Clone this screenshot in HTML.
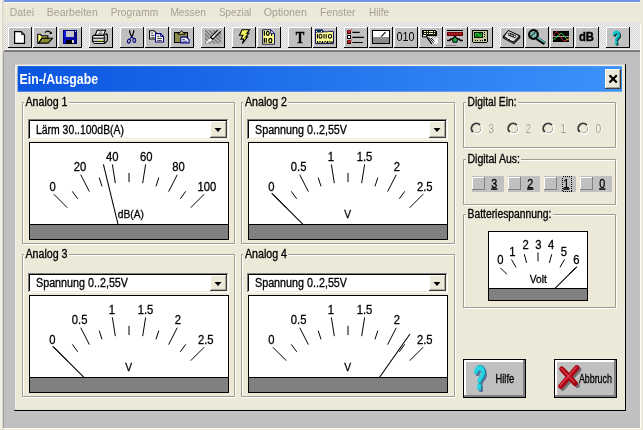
<!DOCTYPE html>
<html><head><meta charset="utf-8"><title>Ein-/Ausgabe</title>
<style>
html,body{margin:0;padding:0;background:#ECE9D8;overflow:hidden}
svg{display:block;font-family:"Liberation Sans",sans-serif;will-change:transform}
rect{shape-rendering:crispEdges}
</style></head><body>
<svg width="643" height="430" viewBox="0 0 643 430">
<rect x="0" y="0" width="643" height="430" fill="#ECE9D8" />
<rect x="0" y="0" width="2" height="430" fill="#F3F1E6" />
<rect x="2" y="0" width="1" height="430" fill="#DAD7CA" />
<rect x="3" y="0" width="1" height="430" fill="#E4E1D4" />
<rect x="4" y="0" width="636" height="2" fill="#7094E6" />
<rect x="4" y="2" width="636" height="1" fill="#F8F7F0" />
<text x="9.7" y="15.7" font-size="11" fill="#A6A28F" textLength="24.3" lengthAdjust="spacingAndGlyphs" >Datei</text>
<text x="46.8" y="15.7" font-size="11" fill="#A6A28F" textLength="51.0" lengthAdjust="spacingAndGlyphs" >Bearbeiten</text>
<text x="110.7" y="15.7" font-size="11" fill="#A6A28F" textLength="47.5" lengthAdjust="spacingAndGlyphs" >Programm</text>
<text x="170.4" y="15.7" font-size="11" fill="#A6A28F" textLength="35.6" lengthAdjust="spacingAndGlyphs" >Messen</text>
<text x="219" y="15.7" font-size="11" fill="#A6A28F" textLength="32.3" lengthAdjust="spacingAndGlyphs" >Spezial</text>
<text x="263.8" y="15.7" font-size="11" fill="#A6A28F" textLength="43.0" lengthAdjust="spacingAndGlyphs" >Optionen</text>
<text x="320" y="15.7" font-size="11" fill="#A6A28F" textLength="35.6" lengthAdjust="spacingAndGlyphs" >Fenster</text>
<text x="369" y="15.7" font-size="11" fill="#A6A28F" textLength="20" lengthAdjust="spacingAndGlyphs" >Hilfe</text>
<defs><pattern id="dz" width="2" height="2" patternUnits="userSpaceOnUse"><rect width="2" height="2" fill="#f4f4f4"/><rect width="1" height="1" fill="#d2d2d2"/><rect x="1" y="1" width="1" height="1" fill="#d2d2d2"/></pattern></defs>
<rect x="4" y="22.6" width="636" height="28" fill="url(#dz)" style="shape-rendering:geometricPrecision"/>
<rect x="4" y="49.3" width="636" height="1.2" fill="#f4f4f4" style="shape-rendering:geometricPrecision" opacity="0.7"/>
<rect x="4" y="50.55" width="636" height="1.1" fill="#000" style="shape-rendering:geometricPrecision"/>
<rect x="3" y="51.65" width="637" height="376.35" fill="#C0C0C0" style="shape-rendering:geometricPrecision"/>
<rect x="3" y="52" width="1" height="376" fill="#A0A0A0" />
<rect x="3" y="428" width="638" height="1" fill="#fff" />
<rect x="640" y="23" width="1" height="406" fill="#fff" />
<rect x="8" y="27" width="24" height="21" fill="#000" />
<rect x="8" y="27" width="23" height="20" fill="#fff" />
<rect x="9" y="28" width="22" height="19" fill="#C0C0C0" />
<rect x="33" y="27" width="24" height="21" fill="#000" />
<rect x="33" y="27" width="23" height="20" fill="#fff" />
<rect x="34" y="28" width="22" height="19" fill="#C0C0C0" />
<rect x="58" y="27" width="24" height="21" fill="#000" />
<rect x="58" y="27" width="23" height="20" fill="#fff" />
<rect x="59" y="28" width="22" height="19" fill="#C0C0C0" />
<rect x="89" y="27" width="24" height="21" fill="#000" />
<rect x="89" y="27" width="23" height="20" fill="#fff" />
<rect x="90" y="28" width="22" height="19" fill="#C0C0C0" />
<rect x="120" y="27" width="24" height="21" fill="#000" />
<rect x="120" y="27" width="23" height="20" fill="#fff" />
<rect x="121" y="28" width="22" height="19" fill="#C0C0C0" />
<rect x="145" y="27" width="24" height="21" fill="#000" />
<rect x="145" y="27" width="23" height="20" fill="#fff" />
<rect x="146" y="28" width="22" height="19" fill="#C0C0C0" />
<rect x="170" y="27" width="24" height="21" fill="#000" />
<rect x="170" y="27" width="23" height="20" fill="#fff" />
<rect x="171" y="28" width="22" height="19" fill="#C0C0C0" />
<rect x="201" y="27" width="24" height="21" fill="#000" />
<rect x="201" y="27" width="23" height="20" fill="#fff" />
<rect x="202" y="28" width="22" height="19" fill="#C0C0C0" />
<rect x="232" y="27" width="24" height="21" fill="#000" />
<rect x="232" y="27" width="23" height="20" fill="#fff" />
<rect x="233" y="28" width="22" height="19" fill="#C0C0C0" />
<rect x="257" y="27" width="24" height="21" fill="#000" />
<rect x="257" y="27" width="23" height="20" fill="#fff" />
<rect x="258" y="28" width="22" height="19" fill="#C0C0C0" />
<rect x="288" y="27" width="24" height="21" fill="#000" />
<rect x="288" y="27" width="23" height="20" fill="#fff" />
<rect x="289" y="28" width="22" height="19" fill="#C0C0C0" />
<rect x="313" y="27" width="24" height="21" fill="#000" />
<rect x="313" y="27" width="23" height="20" fill="#fff" />
<rect x="314" y="28" width="22" height="19" fill="#C0C0C0" />
<rect x="344" y="27" width="24" height="21" fill="#000" />
<rect x="344" y="27" width="23" height="20" fill="#fff" />
<rect x="345" y="28" width="22" height="19" fill="#C0C0C0" />
<rect x="369" y="27" width="24" height="21" fill="#000" />
<rect x="369" y="27" width="23" height="20" fill="#fff" />
<rect x="370" y="28" width="22" height="19" fill="#C0C0C0" />
<rect x="394" y="27" width="24" height="21" fill="#000" />
<rect x="394" y="27" width="23" height="20" fill="#fff" />
<rect x="395" y="28" width="22" height="19" fill="#C0C0C0" />
<rect x="419" y="27" width="24" height="21" fill="#000" />
<rect x="419" y="27" width="23" height="20" fill="#fff" />
<rect x="420" y="28" width="22" height="19" fill="#C0C0C0" />
<rect x="444" y="27" width="24" height="21" fill="#000" />
<rect x="444" y="27" width="23" height="20" fill="#fff" />
<rect x="445" y="28" width="22" height="19" fill="#C0C0C0" />
<rect x="469" y="27" width="24" height="21" fill="#000" />
<rect x="469" y="27" width="23" height="20" fill="#fff" />
<rect x="470" y="28" width="22" height="19" fill="#C0C0C0" />
<rect x="500" y="27" width="24" height="21" fill="#000" />
<rect x="500" y="27" width="23" height="20" fill="#fff" />
<rect x="501" y="28" width="22" height="19" fill="#C0C0C0" />
<rect x="525" y="27" width="24" height="21" fill="#000" />
<rect x="525" y="27" width="23" height="20" fill="#fff" />
<rect x="526" y="28" width="22" height="19" fill="#C0C0C0" />
<rect x="550" y="27" width="24" height="21" fill="#000" />
<rect x="550" y="27" width="23" height="20" fill="#fff" />
<rect x="551" y="28" width="22" height="19" fill="#C0C0C0" />
<rect x="575" y="27" width="24" height="21" fill="#000" />
<rect x="575" y="27" width="23" height="20" fill="#fff" />
<rect x="576" y="28" width="22" height="19" fill="#C0C0C0" />
<rect x="606" y="27" width="24" height="21" fill="#000" />
<rect x="606" y="27" width="23" height="20" fill="#fff" />
<rect x="607" y="28" width="22" height="19" fill="#C0C0C0" />
<path d="M14.6 31.6 H21.2 L24.5 34.9 V43.3 H14.6 Z" fill="#fff" stroke="#000" stroke-width="1.2" stroke-linejoin="miter"/>
<path d="M21.4 32 V34.7 H24.1" fill="none" stroke="#000" stroke-width="0.7"/>
<path d="M37.7 43.1 V34.3 H40.6 L41.4 35.9 H47.9 V38 H41.9 L38.9 43.1 Z" fill="#FFFF80" stroke="#000" stroke-width="1.1" stroke-linejoin="round"/>
<path d="M38.6 43.1 L41.9 38.2 H52.8 L48.2 43.1 Z" fill="#8A8A30" stroke="#000" stroke-width="1.1" stroke-linejoin="round"/>
<path d="M45 32.6 C46.5 30.6 49.5 30.4 51.2 33.4" fill="none" stroke="#000" stroke-width="1.1"/>
<path d="M49.2 33.9 H51.7 V31.6 Z" fill="#000"/>
<rect x="63" y="30" width="14" height="13.8" fill="#00007A"/>
<rect x="63.9" y="30.8" width="2.2" height="12.2" fill="#1414E8"/>
<rect x="63.9" y="37" width="12.2" height="2.6" fill="#0A0AA8"/>
<rect x="66.1" y="30.8" width="8" height="6.2" fill="#C4C4C4"/>
<rect x="66.1" y="39.7" width="8" height="4.1" fill="#000"/>
<rect x="72" y="40.3" width="2" height="2.5" fill="#D8D8D8"/>
<rect x="74.8" y="31" width="0.9" height="0.9" fill="#D0D0F0"/>
<path d="M95.1 35.4 L97.2 30.2 H105.6 L103.3 35.4 Z" fill="#fff" stroke="#000" stroke-width="1.1"/>
<path d="M98.8 32.0 H102.8 M98.1 33.7 H102.1" stroke="#222" stroke-width="0.7"/>
<path d="M93.5 35.4 H104 L106.8 33.6 L107.4 35 V40.6 L104.6 43.4 H94.4 L92.6 41.6 V36.6 Z" fill="#D4D4D4" stroke="#000" stroke-width="1.1" stroke-linejoin="round"/>
<path d="M93.4 36.9 H103.8" stroke="#fff" stroke-width="0.9"/><path d="M92.8 38.2 H104.2 M92.8 41.4 H104.2 M104.3 35.6 V43.2" stroke="#000" stroke-width="1"/><path d="M93.4 42.4 H103.6" stroke="#f4f4f4" stroke-width="0.8"/>
<path d="M105.4 36.5 V42 M106.4 35.5 V41" stroke="#555" stroke-width="0.6" stroke-dasharray="1 1"/>
<rect x="98" y="39.5" width="4.8" height="1" fill="#C8E040"/>
<path d="M129.5 30.2 L130.2 33.8 L131.7 36.8 M133.9 30.2 L133.2 33.8 L131.7 36.8" fill="none" stroke="#000" stroke-width="1.2"/><path d="M131.7 36.6 L130.2 38.8 M131.7 36.6 L133.4 38.2" stroke="#000080" stroke-width="1.1"/>
<ellipse cx="128.9" cy="41.2" rx="1.45" ry="2.0" fill="none" stroke="#000080" stroke-width="1.1" transform="rotate(20 129.1 41.2)"/>
<ellipse cx="134.3" cy="40.4" rx="1.45" ry="2.0" fill="none" stroke="#000080" stroke-width="1.1" transform="rotate(-5 134.1 40.5)"/>
<path d="M149.6 30.7 H154 L156.3 33 V39 H149.6 Z" fill="#fff" stroke="#000" stroke-width="1.1"/>
<path d="M151.2 33 H153.2 M151.2 35.3 H154.4 M151.2 37.4 H154.4" stroke="#000" stroke-width="0.8"/>
<path d="M155.5 33.6 H160.6 L163.5 36.5 V42 H155.5 Z" fill="#fff" stroke="#000080" stroke-width="1.1"/>
<path d="M160.6 33.6 V36.5 H163.5" fill="none" stroke="#000080" stroke-width="0.9"/>
<path d="M157.2 36.3 H159.4 M157.2 38.4 H161.8 M157.2 40.4 H161.8" stroke="#000" stroke-width="0.8"/>
<rect x="174.6" y="32.4" width="12.8" height="10" rx="0.8" fill="#8C8C4C" stroke="#000" stroke-width="1.1"/>
<path d="M177.9 34.2 H185 V33 H183.4 L181.6 30.6 L179.6 33 H177.9 Z" fill="#E8E890" stroke="#000" stroke-width="1"/>
<path d="M180.8 37.1 H186.4 L189 39.7 V42.9 H180.8 Z" fill="#fff" stroke="#000080" stroke-width="1.1"/>
<path d="M182.4 39.4 H184.8 M182.4 41.2 H187.2" stroke="#000080" stroke-width="0.8"/>
<clipPath id="hc"><rect x="205" y="30" width="16.2" height="13.8"/></clipPath>
<g clip-path="url(#hc)" stroke="#7c7c7c" stroke-width="1.6"><line x1="193" y1="30" x2="206.8" y2="43.8"/><line x1="197" y1="30" x2="210.8" y2="43.8"/><line x1="201" y1="30" x2="214.8" y2="43.8"/><line x1="205" y1="30" x2="218.8" y2="43.8"/><line x1="209" y1="30" x2="222.8" y2="43.8"/><line x1="213" y1="30" x2="226.8" y2="43.8"/><line x1="217" y1="30" x2="230.8" y2="43.8"/><line x1="221" y1="30" x2="234.8" y2="43.8"/></g>
<path d="M217.6 30.2 L210.2 37.8 L212.7 39.2 L220.7 31.4" fill="#C8C8C8" stroke="none"/><path d="M213.6 34.4 L210.2 37.8 L212.7 39.2 L216.2 35.8" fill="#fff" stroke="none"/>
<path d="M217.6 30.2 L210.2 37.8 M220.7 31.4 L212.7 39.2" stroke="#000" stroke-width="1.1"/>
<path d="M210.4 37.4 L212.9 39.4" stroke="#000" stroke-width="1.6"/>
<path d="M210.2 38.6 L211.8 40 L206.2 42.8 Z" fill="#fff" stroke="#fff" stroke-width="0.8"/>
<path d="M242.1 29.8 H249.6 L246.8 33.3 H248.8 L245.7 36.9 H247.5 L242.4 43.6 L243.8 39.1 H241 L242.9 35.2 H239.5 Z" fill="#F4F460" stroke="#000" stroke-width="1.1" stroke-linejoin="miter"/>
<path d="M262.6 29.8 H270.7 L274.5 33.6 V44.2 H262.6 Z" fill="#FFFF8C" stroke="#101058" stroke-width="1"/>
<path d="M270.7 29.8 V33.6 H274.5 Z" fill="#fff" stroke="#000080" stroke-width="0.9"/>
<path d="M264.4 31 V35.6 M264.4 38 V42.8 M266.3 38 V42.8" stroke="#000" stroke-width="1.2"/>
<ellipse cx="267.8" cy="33.3" rx="1.4" ry="2" fill="none" stroke="#000" stroke-width="1.2"/>
<ellipse cx="270.3" cy="40.4" rx="1.5" ry="2.1" fill="none" stroke="#000" stroke-width="1.2"/>
<path d="M271.6 34 V36" stroke="#000" stroke-width="1"/>
<path d="M315.5 43.6 V31.8 H327.5 L328.5 31.4 H333.5 V43.6 Z" fill="#FFFF98" stroke="#101058" stroke-width="1"/>
<path d="M315.5 31.8 V29.9 H322.5 L323.3 31.8 Z" fill="#008000" stroke="#000080" stroke-width="1"/>
<rect x="316.2" y="30.6" width="0.9" height="0.9" fill="#fff"/><rect x="321.4" y="30.6" width="0.9" height="0.9" fill="#fff"/>
<path d="M317.5 34 V38.4 M324 34 V38.4 M326.2 34 V38.4" stroke="#000" stroke-width="1.05"/>
<ellipse cx="320.5" cy="36.2" rx="1.5" ry="2" fill="none" stroke="#000" stroke-width="1.05"/>
<ellipse cx="330" cy="36.2" rx="1.6" ry="2" fill="none" stroke="#000" stroke-width="1.05"/>
<path d="M317.5 41 V43.3 M322.5 41 V43.3 M327.5 41 V43.3 M332 41 V43.3" stroke="#000" stroke-width="1.1"/>
<path d="M319 43.2 C319 40.6 321.2 40.6 321.2 43.2 M324 43.2 C324 40.6 326.2 40.6 326.2 43.2 M328.8 43.2 C328.8 40.6 330.8 40.6 330.8 43.2" fill="none" stroke="#000" stroke-width="1"/>
<rect x="347.3" y="30.8" width="3.5" height="2.8" fill="#D81020" stroke="#300000" stroke-width="0.8"/>
<rect x="347.3" y="32.5" width="3.5" height="1.2" fill="#200000"/>
<path d="M347.6 30.6 L349.2 31.700000000000003 L352.2 29.400000000000002" fill="none" stroke="#F02838" stroke-width="1"/>
<rect x="347.5" y="35.800000000000004" width="3.2" height="2.9" fill="#fff" stroke="#000" stroke-width="1.1"/>
<rect x="347.3" y="40.900000000000006" width="3.5" height="2.8" fill="#D81020" stroke="#300000" stroke-width="0.8"/>
<rect x="347.3" y="42.6" width="3.5" height="1.2" fill="#200000"/>
<path d="M347.6 40.7 L349.2 41.800000000000004 L352.2 39.5" fill="none" stroke="#F02838" stroke-width="1"/>
<path d="M352.3 32.4 H359.7 M352.3 37.4 H363.9 M352.3 42.5 H362.8" stroke="#000" stroke-width="1.2"/>
<rect x="372.6" y="30.6" width="17" height="12.6" fill="#fff" stroke="#000" stroke-width="1.2"/>
<rect x="373.2" y="36.9" width="15.8" height="5.7" fill="#8C8C8C"/>
<path d="M385.5 32.2 L381.3 36.7" stroke="#000" stroke-width="1.1"/>
<rect x="422.5" y="30.3" width="13.6" height="5.6" rx="0.5" fill="#1c1c14" stroke="#000" stroke-width="1"/>
<rect x="424.30" y="31.05" width="1.5" height="1.1" fill="#FFFFC8"/>
<rect x="426.65" y="31.05" width="1.5" height="1.1" fill="#FFFFC8"/>
<rect x="429.00" y="31.05" width="1.5" height="1.1" fill="#FFFFC8"/>
<rect x="431.35" y="31.05" width="1.5" height="1.1" fill="#FFFFC8"/>
<rect x="433.70" y="31.05" width="1.5" height="1.1" fill="#FFFFC8"/>
<rect x="424.30" y="32.85" width="1.5" height="1.1" fill="#FFFFC8"/>
<rect x="426.65" y="32.85" width="1.5" height="1.1" fill="#FFFFC8"/>
<rect x="429.00" y="32.85" width="1.5" height="1.1" fill="#FFFFC8"/>
<rect x="431.35" y="32.85" width="1.5" height="1.1" fill="#FFFFC8"/>
<rect x="433.70" y="32.85" width="1.5" height="1.1" fill="#FFFFC8"/>
<rect x="423.2" y="34.7" width="2.6" height="1.7" fill="#F4F4E0"/>
<path d="M422.5 35 V36.9 H426" fill="none" stroke="#000" stroke-width="1"/>
<path d="M429.5 36.6 L437.4 36.8 L438.2 43.2 L434.8 44 L431 41.4 Z" fill="#fff"/>
<path d="M431.4 36.4 H436.6 M432.2 37.6 H437 M433 38.8 H436" stroke="#555" stroke-width="0.8" stroke-dasharray="0.8 0.9"/>
<path d="M426.2 36.4 L431.8 43.8" stroke="#000" stroke-width="1.3"/>
<path d="M428.8 37.4 L433.4 42.6 M431 38 L434.4 41.4" stroke="#000" stroke-width="0.9"/>
<rect x="447.1" y="29.8" width="15.7" height="1" fill="#000"/>
<rect x="447.1" y="32.1" width="15.7" height="3.8" fill="#6C0004"/>
<circle cx="449.4" cy="33.9" r="0.85" fill="#E83848"/>
<circle cx="451.9" cy="33.9" r="0.85" fill="#E83848"/>
<circle cx="454.7" cy="33.9" r="0.85" fill="#E83848"/>
<circle cx="457.5" cy="33.9" r="0.85" fill="#E83848"/>
<circle cx="460.5" cy="33.9" r="0.85" fill="#E83848"/>
<path d="M447.1 40.4 H449.6 L451 39 H452.6 L454.9 36.6 L457.3 39 H458.9 L460.3 40.4 H462.8" fill="none" stroke="#000" stroke-width="1.5"/>
<path d="M452.4 39.4 L454.9 36.9 L457.5 39.4 L457 42.3 H452.9 Z" fill="#18A040" stroke="#000" stroke-width="0.9"/>
<rect x="445.5" y="45" width="10" height="0.9" fill="#888"/>
<rect x="472.6" y="30.5" width="14.7" height="11.8" rx="1" fill="#C4C494" stroke="#000" stroke-width="1.1"/>
<rect x="474.4" y="32.1" width="8.2" height="5.2" fill="#0A7A1A" stroke="#000" stroke-width="0.9"/>
<path d="M475.2 35.6 C476.4 32.4 477.6 32.4 478.8 34.8 C480 37.2 480.8 36.8 481.8 34.6" fill="none" stroke="#30F040" stroke-width="0.9"/>
<rect x="484" y="32.2" width="1.1" height="1.1" fill="#000"/>
<rect x="484" y="34.2" width="1.1" height="1.1" fill="#000"/>
<rect x="484" y="36.1" width="1.1" height="1.1" fill="#000"/>
<rect x="474.7" y="39.7" width="1.1" height="1.1" fill="#000"/>
<rect x="476.9" y="39.7" width="1.1" height="1.1" fill="#000"/>
<rect x="479.7" y="39.7" width="1.1" height="1.1" fill="#000"/>
<rect x="481.9" y="39.7" width="1.1" height="1.1" fill="#000"/>
<rect x="484.2" y="38.9" width="2" height="2" fill="#000"/>
<path d="M508.4 29.9 L520.3 35.5 L520.3 37.9 L513.9 44.3 L502.9 38.3 L502.9 36 Z" fill="#000"/>
<path d="M508.5 31.1 L518.7 35.9 L513.5 41.4 L504.4 36.3 Z" fill="#D8D8D8"/>
<path d="M504.1 37.6 L513.5 42.7 L519.2 36.9 L519.2 37.5 L513.6 43.2 L504.1 38 Z" fill="#9c9c9c"/>
<path d="M509.4 34.3 L514.6 36.4" stroke="#000" stroke-width="2.9" stroke-linecap="round"/>
<path d="M510.4 34.7 L513.6 36" stroke="#B8B8A8" stroke-width="1.1"/>
<circle cx="509.3" cy="34.3" r="0.8" fill="#fff"/>
<circle cx="514.7" cy="36.4" r="0.8" fill="#fff"/>
<path d="M506.6 37.4 L509.2 38.7 M510 39.3 L512.2 40.4" stroke="#fff" stroke-width="0.9"/>
<circle cx="533.5" cy="34.5" r="4.3" fill="#5FAFA6" stroke="#000" stroke-width="2.3"/>
<path d="M531 31.8 V37.4 M533.4 31 V38.2 M535.8 31.8 V37.4" stroke="#E8F8F4" stroke-width="0.9" stroke-dasharray="0.9 1.0"/>
<path d="M537.6 29.8 L529.2 38.4" stroke="#000" stroke-width="1"/>
<path d="M536.8 38.2 L544.8 43.6" stroke="#000" stroke-width="3.6"/>
<path d="M537.4 37.6 L545 42.6" stroke="#5CC8BC" stroke-width="1.4"/>
<rect x="553" y="31.3" width="16" height="10.6" fill="#000"/>
<rect x="553" y="36.2" width="16" height="0.9" fill="#A0A0A0"/>
<path d="M553.4 36.4 C555 31.6 557.2 30.4 559 33.8 C561 37.6 563.6 43 566 40.6 C567 39.8 568 39 569 38.6" fill="none" stroke="#D83030" stroke-width="1"/>
<path d="M553.4 39.6 C555.4 39.4 557.6 35 561 33.2 C563 33 566 39.6 568.4 40" fill="none" stroke="#30D840" stroke-width="1"/>
<path d="M566 40.2 L568.8 38.8" stroke="#E0C040" stroke-width="0.9"/>
<text x="295.7" y="42.7" font-size="16" fill="#000" textLength="8.5" lengthAdjust="spacingAndGlyphs" font-weight="bold" font-family="'Liberation Serif',serif" stroke="#000" stroke-width="0.5">T</text>
<text x="396.6" y="41.0" font-size="12.6" fill="#010101" textLength="18" lengthAdjust="spacingAndGlyphs" >010</text>
<text x="579" y="40.8" font-size="13" fill="#000" textLength="15" lengthAdjust="spacingAndGlyphs" font-weight="bold" stroke="#000" stroke-width="0.45">dB</text>
<text x="613.2" y="44.7" font-size="19" fill="#002828" textLength="8.2" lengthAdjust="spacingAndGlyphs" font-weight="bold" stroke="#002828" stroke-width="0.9">?</text>
<text x="612.2" y="43.8" font-size="19" fill="#10C4C8" textLength="8.2" lengthAdjust="spacingAndGlyphs" font-weight="bold" stroke="#10C4C8" stroke-width="0.8">?</text>
<rect x="14.4" y="64.2" width="611.6" height="346.8" fill="#000" style="shape-rendering:geometricPrecision"/>
<rect x="14.4" y="64.2" width="610.5" height="345.6" fill="#fff" style="shape-rendering:geometricPrecision"/>
<rect x="15.5" y="65.3" width="609.4" height="344.5" fill="#ECE9D8" style="shape-rendering:geometricPrecision"/>
<defs><linearGradient id="tg" x1="0" x2="1" y1="0" y2="0"><stop offset="0" stop-color="#0A55E0"/><stop offset="1" stop-color="#3D92FB"/></linearGradient></defs>
<rect x="17.6" y="66.1" width="604.4" height="25.6" fill="url(#tg)" style="shape-rendering:geometricPrecision"/>
<text x="19.6" y="83.9" font-size="14" fill="#fff" textLength="78.4" lengthAdjust="spacingAndGlyphs" font-weight="bold" >Ein-/Ausgabe</text>
<rect x="605" y="69" width="16" height="20" fill="#404040" />
<rect x="605" y="69" width="15" height="19" fill="#fff" />
<rect x="606" y="70" width="14" height="18" fill="#ACA899" />
<rect x="606" y="70" width="13" height="17" fill="#ECE9D8" />
<path d="M609.5 75.3 L616.8 82.5 M616.8 75.3 L609.5 82.5" stroke="#000" stroke-width="2.2" fill="none"/>
<path d="M23.5 103.5 H235.5 V244.5 H23.5 Z" fill="none" stroke="#fff" stroke-width="1"/>
<path d="M22.5 102.5 H234.5 V243.5 H22.5 Z" fill="none" stroke="#A09D90" stroke-width="1"/>
<rect x="23.5" y="101" width="45" height="4" fill="#ECE9D8" />
<text x="25.5" y="106" font-size="12" fill="#000" textLength="42" lengthAdjust="spacingAndGlyphs" stroke="#000" stroke-width="0.3" >Analog 1</text>
<path d="M242.5 103.5 H455.5 V244.5 H242.5 Z" fill="none" stroke="#fff" stroke-width="1"/>
<path d="M241.5 102.5 H454.5 V243.5 H241.5 Z" fill="none" stroke="#A09D90" stroke-width="1"/>
<rect x="243" y="101" width="45" height="4" fill="#ECE9D8" />
<text x="245" y="106" font-size="12" fill="#000" textLength="42" lengthAdjust="spacingAndGlyphs" stroke="#000" stroke-width="0.3" >Analog 2</text>
<path d="M23.5 255.5 H235.5 V397.5 H23.5 Z" fill="none" stroke="#fff" stroke-width="1"/>
<path d="M22.5 254.5 H234.5 V396.5 H22.5 Z" fill="none" stroke="#A09D90" stroke-width="1"/>
<rect x="23.5" y="253" width="45" height="4" fill="#ECE9D8" />
<text x="25.5" y="258" font-size="12" fill="#000" textLength="42" lengthAdjust="spacingAndGlyphs" stroke="#000" stroke-width="0.3" >Analog 3</text>
<path d="M242.5 255.5 H455.5 V397.5 H242.5 Z" fill="none" stroke="#fff" stroke-width="1"/>
<path d="M241.5 254.5 H454.5 V396.5 H241.5 Z" fill="none" stroke="#A09D90" stroke-width="1"/>
<rect x="243" y="253" width="45" height="4" fill="#ECE9D8" />
<text x="245" y="258" font-size="12" fill="#000" textLength="42" lengthAdjust="spacingAndGlyphs" stroke="#000" stroke-width="0.3" >Analog 4</text>
<path d="M464.5 103.5 H616.5 V148.5 H464.5 Z" fill="none" stroke="#fff" stroke-width="1"/>
<path d="M463.5 102.5 H615.5 V147.5 H463.5 Z" fill="none" stroke="#A09D90" stroke-width="1"/>
<rect x="465.5" y="101" width="52" height="4" fill="#ECE9D8" />
<text x="467.5" y="106" font-size="12" fill="#000" textLength="49" lengthAdjust="spacingAndGlyphs" stroke="#000" stroke-width="0.3" >Digital Ein:</text>
<path d="M464.5 160.5 H616.5 V205.5 H464.5 Z" fill="none" stroke="#fff" stroke-width="1"/>
<path d="M463.5 159.5 H615.5 V204.5 H463.5 Z" fill="none" stroke="#A09D90" stroke-width="1"/>
<rect x="465.5" y="158" width="55.5" height="4" fill="#ECE9D8" />
<text x="467.5" y="163" font-size="12" fill="#000" textLength="52.5" lengthAdjust="spacingAndGlyphs" stroke="#000" stroke-width="0.3" >Digital Aus:</text>
<path d="M464.5 215.5 H616.5 V308.5 H464.5 Z" fill="none" stroke="#fff" stroke-width="1"/>
<path d="M463.5 214.5 H615.5 V307.5 H463.5 Z" fill="none" stroke="#A09D90" stroke-width="1"/>
<rect x="465.5" y="213" width="87" height="4" fill="#ECE9D8" />
<text x="467.5" y="218" font-size="12" fill="#000" textLength="84" lengthAdjust="spacingAndGlyphs" stroke="#000" stroke-width="0.3" >Batteriespannung:</text>
<rect x="28" y="119" width="201" height="21" fill="#fff" />
<rect x="28" y="119" width="200" height="20" fill="#808080" />
<rect x="29" y="120" width="199" height="19" fill="#ECE9D8" />
<rect x="29" y="120" width="198" height="18" fill="#000" />
<rect x="30" y="121" width="197" height="17" fill="#fff" />
<rect x="210" y="121" width="17" height="17" fill="#404040" />
<rect x="210" y="121" width="16" height="16" fill="#fff" />
<rect x="211" y="122" width="15" height="15" fill="#ACA899" />
<rect x="211" y="122" width="14" height="14" fill="#ECE9D8" />
<path d="M214.5 128 h7 l-3.5 4 Z" fill="#000"/>
<text x="36" y="134" font-size="12" fill="#000" textLength="88" lengthAdjust="spacingAndGlyphs" stroke="#000" stroke-width="0.3" >Lärm 30..100dB(A)</text>
<rect x="247" y="119" width="201" height="21" fill="#fff" />
<rect x="247" y="119" width="200" height="20" fill="#808080" />
<rect x="248" y="120" width="199" height="19" fill="#ECE9D8" />
<rect x="248" y="120" width="198" height="18" fill="#000" />
<rect x="249" y="121" width="197" height="17" fill="#fff" />
<rect x="429" y="121" width="17" height="17" fill="#404040" />
<rect x="429" y="121" width="16" height="16" fill="#fff" />
<rect x="430" y="122" width="15" height="15" fill="#ACA899" />
<rect x="430" y="122" width="14" height="14" fill="#ECE9D8" />
<path d="M433.5 128 h7 l-3.5 4 Z" fill="#000"/>
<text x="255" y="134" font-size="12" fill="#000" textLength="92" lengthAdjust="spacingAndGlyphs" stroke="#000" stroke-width="0.3" >Spannung 0..2,55V</text>
<rect x="28" y="273" width="201" height="20" fill="#fff" />
<rect x="28" y="273" width="200" height="19" fill="#808080" />
<rect x="29" y="274" width="199" height="18" fill="#ECE9D8" />
<rect x="29" y="274" width="198" height="17" fill="#000" />
<rect x="30" y="275" width="197" height="16" fill="#fff" />
<rect x="210" y="275" width="17" height="16" fill="#404040" />
<rect x="210" y="275" width="16" height="15" fill="#fff" />
<rect x="211" y="276" width="15" height="14" fill="#ACA899" />
<rect x="211" y="276" width="14" height="13" fill="#ECE9D8" />
<path d="M214.5 282 h7 l-3.5 4 Z" fill="#000"/>
<text x="36" y="287" font-size="12" fill="#000" textLength="92" lengthAdjust="spacingAndGlyphs" stroke="#000" stroke-width="0.3" >Spannung 0..2,55V</text>
<rect x="247" y="273" width="201" height="20" fill="#fff" />
<rect x="247" y="273" width="200" height="19" fill="#808080" />
<rect x="248" y="274" width="199" height="18" fill="#ECE9D8" />
<rect x="248" y="274" width="198" height="17" fill="#000" />
<rect x="249" y="275" width="197" height="16" fill="#fff" />
<rect x="429" y="275" width="17" height="16" fill="#404040" />
<rect x="429" y="275" width="16" height="15" fill="#fff" />
<rect x="430" y="276" width="15" height="14" fill="#ACA899" />
<rect x="430" y="276" width="14" height="13" fill="#ECE9D8" />
<path d="M433.5 282 h7 l-3.5 4 Z" fill="#000"/>
<text x="255" y="287" font-size="12" fill="#000" textLength="92" lengthAdjust="spacingAndGlyphs" stroke="#000" stroke-width="0.3" >Spannung 0..2,55V</text>
<rect x="29" y="142" width="200" height="98" fill="#000" />
<rect x="30" y="143" width="198" height="96" fill="#fff" />
<clipPath id="c29_142"><rect x="30" y="143" width="198" height="81"/></clipPath>
<g clip-path="url(#c29_142)">
<line x1="67.27" y1="207.67" x2="53.83" y2="194.23" stroke="#000" stroke-width="1.0" />
<line x1="77.69" y1="198.77" x2="72.28" y2="191.33" stroke="#000" stroke-width="1.0" />
<line x1="89.37" y1="191.62" x2="80.74" y2="174.69" stroke="#000" stroke-width="1.0" />
<line x1="102.02" y1="186.37" x2="99.18" y2="177.62" stroke="#000" stroke-width="1.0" />
<line x1="115.34" y1="183.17" x2="112.37" y2="164.41" stroke="#000" stroke-width="1.0" />
<line x1="129.00" y1="182.10" x2="129.00" y2="172.90" stroke="#000" stroke-width="1.0" />
<line x1="142.66" y1="183.17" x2="145.63" y2="164.41" stroke="#000" stroke-width="1.0" />
<line x1="155.98" y1="186.37" x2="158.82" y2="177.62" stroke="#000" stroke-width="1.0" />
<line x1="168.63" y1="191.62" x2="177.26" y2="174.69" stroke="#000" stroke-width="1.0" />
<line x1="180.31" y1="198.77" x2="185.72" y2="191.33" stroke="#000" stroke-width="1.0" />
<line x1="190.73" y1="207.67" x2="204.17" y2="194.23" stroke="#000" stroke-width="1.0" />
<line x1="129.00" y1="269.40" x2="103.42" y2="164.47" stroke="#000" stroke-width="1.05" />
</g>
<text x="52.6" y="190.6" font-size="12.5" fill="#000" text-anchor="middle" stroke="#000" stroke-width="0.3" transform="translate(52.6,0) scale(0.9,1) translate(-52.6,0)">0</text>
<text x="80.1" y="170.9" font-size="12.5" fill="#000" text-anchor="middle" stroke="#000" stroke-width="0.3" transform="translate(80.1,0) scale(0.9,1) translate(-80.1,0)">20</text>
<text x="112.3" y="160.7" font-size="12.5" fill="#000" text-anchor="middle" stroke="#000" stroke-width="0.3" transform="translate(112.3,0) scale(0.9,1) translate(-112.3,0)">40</text>
<text x="146.3" y="160.7" font-size="12.5" fill="#000" text-anchor="middle" stroke="#000" stroke-width="0.3" transform="translate(146.3,0) scale(0.9,1) translate(-146.3,0)">60</text>
<text x="178.4" y="170.9" font-size="12.5" fill="#000" text-anchor="middle" stroke="#000" stroke-width="0.3" transform="translate(178.4,0) scale(0.9,1) translate(-178.4,0)">80</text>
<text x="207" y="190.6" font-size="12.5" fill="#000" text-anchor="middle" stroke="#000" stroke-width="0.3" transform="translate(207.0,0) scale(0.9,1) translate(-207.0,0)">100</text>
<text x="130.8" y="218.3" font-size="11.8" fill="#000" text-anchor="middle" stroke="#000" stroke-width="0.3" transform="translate(130.8,0) scale(0.87,1) translate(-130.8,0)">dB(A)</text>
<rect x="29" y="224" width="200" height="1" fill="#000" />
<rect x="30" y="225" width="198" height="14" fill="#808080" />
<rect x="248" y="142" width="200" height="98" fill="#000" />
<rect x="249" y="143" width="198" height="96" fill="#fff" />
<clipPath id="c248_142"><rect x="249" y="143" width="198" height="81"/></clipPath>
<g clip-path="url(#c248_142)">
<line x1="286.27" y1="207.67" x2="272.83" y2="194.23" stroke="#000" stroke-width="1.0" />
<line x1="296.69" y1="198.77" x2="291.28" y2="191.33" stroke="#000" stroke-width="1.0" />
<line x1="308.37" y1="191.62" x2="299.74" y2="174.69" stroke="#000" stroke-width="1.0" />
<line x1="321.02" y1="186.37" x2="318.18" y2="177.62" stroke="#000" stroke-width="1.0" />
<line x1="334.34" y1="183.17" x2="331.37" y2="164.41" stroke="#000" stroke-width="1.0" />
<line x1="348.00" y1="182.10" x2="348.00" y2="172.90" stroke="#000" stroke-width="1.0" />
<line x1="361.66" y1="183.17" x2="364.63" y2="164.41" stroke="#000" stroke-width="1.0" />
<line x1="374.98" y1="186.37" x2="377.82" y2="177.62" stroke="#000" stroke-width="1.0" />
<line x1="387.63" y1="191.62" x2="396.26" y2="174.69" stroke="#000" stroke-width="1.0" />
<line x1="399.31" y1="198.77" x2="404.72" y2="191.33" stroke="#000" stroke-width="1.0" />
<line x1="409.73" y1="207.67" x2="423.17" y2="194.23" stroke="#000" stroke-width="1.0" />
<line x1="348.00" y1="269.40" x2="271.63" y2="193.03" stroke="#000" stroke-width="1.05" />
</g>
<text x="271.3" y="190.7" font-size="12.5" fill="#000" text-anchor="middle" stroke="#000" stroke-width="0.3" transform="translate(271.3,0) scale(0.9,1) translate(-271.3,0)">0</text>
<text x="298.6" y="171.29999999999998" font-size="12.5" fill="#000" text-anchor="middle" stroke="#000" stroke-width="0.3" transform="translate(298.6,0) scale(0.9,1) translate(-298.6,0)">0.5</text>
<text x="331" y="160.9" font-size="12.5" fill="#000" text-anchor="middle" stroke="#000" stroke-width="0.3" transform="translate(331.0,0) scale(0.9,1) translate(-331.0,0)">1</text>
<text x="364.5" y="160.9" font-size="12.5" fill="#000" text-anchor="middle" stroke="#000" stroke-width="0.3" transform="translate(364.5,0) scale(0.9,1) translate(-364.5,0)">1.5</text>
<text x="396.9" y="171.29999999999998" font-size="12.5" fill="#000" text-anchor="middle" stroke="#000" stroke-width="0.3" transform="translate(396.9,0) scale(0.9,1) translate(-396.9,0)">2</text>
<text x="424.8" y="190.7" font-size="12.5" fill="#000" text-anchor="middle" stroke="#000" stroke-width="0.3" transform="translate(424.8,0) scale(0.9,1) translate(-424.8,0)">2.5</text>
<text x="347.6" y="218.5" font-size="11.8" fill="#000" text-anchor="middle" stroke="#000" stroke-width="0.3" transform="translate(347.6,0) scale(0.87,1) translate(-347.6,0)">V</text>
<rect x="248" y="224" width="200" height="1" fill="#000" />
<rect x="249" y="225" width="198" height="14" fill="#808080" />
<rect x="29" y="295" width="200" height="98" fill="#000" />
<rect x="30" y="296" width="198" height="96" fill="#fff" />
<clipPath id="c29_295"><rect x="30" y="296" width="198" height="81"/></clipPath>
<g clip-path="url(#c29_295)">
<line x1="67.27" y1="360.67" x2="53.83" y2="347.23" stroke="#000" stroke-width="1.0" />
<line x1="77.69" y1="351.77" x2="72.28" y2="344.33" stroke="#000" stroke-width="1.0" />
<line x1="89.37" y1="344.62" x2="80.74" y2="327.69" stroke="#000" stroke-width="1.0" />
<line x1="102.02" y1="339.37" x2="99.18" y2="330.62" stroke="#000" stroke-width="1.0" />
<line x1="115.34" y1="336.17" x2="112.37" y2="317.41" stroke="#000" stroke-width="1.0" />
<line x1="129.00" y1="335.10" x2="129.00" y2="325.90" stroke="#000" stroke-width="1.0" />
<line x1="142.66" y1="336.17" x2="145.63" y2="317.41" stroke="#000" stroke-width="1.0" />
<line x1="155.98" y1="339.37" x2="158.82" y2="330.62" stroke="#000" stroke-width="1.0" />
<line x1="168.63" y1="344.62" x2="177.26" y2="327.69" stroke="#000" stroke-width="1.0" />
<line x1="180.31" y1="351.77" x2="185.72" y2="344.33" stroke="#000" stroke-width="1.0" />
<line x1="190.73" y1="360.67" x2="204.17" y2="347.23" stroke="#000" stroke-width="1.0" />
<line x1="129.00" y1="422.40" x2="52.63" y2="346.03" stroke="#000" stroke-width="1.05" />
</g>
<text x="52.3" y="343.70000000000005" font-size="12.5" fill="#000" text-anchor="middle" stroke="#000" stroke-width="0.3" transform="translate(52.3,0) scale(0.9,1) translate(-52.3,0)">0</text>
<text x="79.6" y="324.3" font-size="12.5" fill="#000" text-anchor="middle" stroke="#000" stroke-width="0.3" transform="translate(79.6,0) scale(0.9,1) translate(-79.6,0)">0.5</text>
<text x="112" y="313.90000000000003" font-size="12.5" fill="#000" text-anchor="middle" stroke="#000" stroke-width="0.3" transform="translate(112.0,0) scale(0.9,1) translate(-112.0,0)">1</text>
<text x="145.5" y="313.90000000000003" font-size="12.5" fill="#000" text-anchor="middle" stroke="#000" stroke-width="0.3" transform="translate(145.5,0) scale(0.9,1) translate(-145.5,0)">1.5</text>
<text x="177.9" y="324.3" font-size="12.5" fill="#000" text-anchor="middle" stroke="#000" stroke-width="0.3" transform="translate(177.9,0) scale(0.9,1) translate(-177.9,0)">2</text>
<text x="205.8" y="343.70000000000005" font-size="12.5" fill="#000" text-anchor="middle" stroke="#000" stroke-width="0.3" transform="translate(205.8,0) scale(0.9,1) translate(-205.8,0)">2.5</text>
<text x="128.6" y="371.5" font-size="11.8" fill="#000" text-anchor="middle" stroke="#000" stroke-width="0.3" transform="translate(128.6,0) scale(0.87,1) translate(-128.6,0)">V</text>
<rect x="29" y="377" width="200" height="1" fill="#000" />
<rect x="30" y="378" width="198" height="14" fill="#808080" />
<rect x="248" y="295" width="200" height="98" fill="#000" />
<rect x="249" y="296" width="198" height="96" fill="#fff" />
<clipPath id="c248_295"><rect x="249" y="296" width="198" height="81"/></clipPath>
<g clip-path="url(#c248_295)">
<line x1="286.27" y1="360.67" x2="272.83" y2="347.23" stroke="#000" stroke-width="1.0" />
<line x1="296.69" y1="351.77" x2="291.28" y2="344.33" stroke="#000" stroke-width="1.0" />
<line x1="308.37" y1="344.62" x2="299.74" y2="327.69" stroke="#000" stroke-width="1.0" />
<line x1="321.02" y1="339.37" x2="318.18" y2="330.62" stroke="#000" stroke-width="1.0" />
<line x1="334.34" y1="336.17" x2="331.37" y2="317.41" stroke="#000" stroke-width="1.0" />
<line x1="348.00" y1="335.10" x2="348.00" y2="325.90" stroke="#000" stroke-width="1.0" />
<line x1="361.66" y1="336.17" x2="364.63" y2="317.41" stroke="#000" stroke-width="1.0" />
<line x1="374.98" y1="339.37" x2="377.82" y2="330.62" stroke="#000" stroke-width="1.0" />
<line x1="387.63" y1="344.62" x2="396.26" y2="327.69" stroke="#000" stroke-width="1.0" />
<line x1="399.31" y1="351.77" x2="404.72" y2="344.33" stroke="#000" stroke-width="1.0" />
<line x1="409.73" y1="360.67" x2="423.17" y2="347.23" stroke="#000" stroke-width="1.0" />
<line x1="348.00" y1="422.40" x2="409.95" y2="333.93" stroke="#000" stroke-width="1.05" />
</g>
<text x="271.3" y="343.70000000000005" font-size="12.5" fill="#000" text-anchor="middle" stroke="#000" stroke-width="0.3" transform="translate(271.3,0) scale(0.9,1) translate(-271.3,0)">0</text>
<text x="298.6" y="324.3" font-size="12.5" fill="#000" text-anchor="middle" stroke="#000" stroke-width="0.3" transform="translate(298.6,0) scale(0.9,1) translate(-298.6,0)">0.5</text>
<text x="331" y="313.90000000000003" font-size="12.5" fill="#000" text-anchor="middle" stroke="#000" stroke-width="0.3" transform="translate(331.0,0) scale(0.9,1) translate(-331.0,0)">1</text>
<text x="364.5" y="313.90000000000003" font-size="12.5" fill="#000" text-anchor="middle" stroke="#000" stroke-width="0.3" transform="translate(364.5,0) scale(0.9,1) translate(-364.5,0)">1.5</text>
<text x="396.9" y="324.3" font-size="12.5" fill="#000" text-anchor="middle" stroke="#000" stroke-width="0.3" transform="translate(396.9,0) scale(0.9,1) translate(-396.9,0)">2</text>
<text x="424.8" y="343.70000000000005" font-size="12.5" fill="#000" text-anchor="middle" stroke="#000" stroke-width="0.3" transform="translate(424.8,0) scale(0.9,1) translate(-424.8,0)">2.5</text>
<text x="347.6" y="371.5" font-size="11.8" fill="#000" text-anchor="middle" stroke="#000" stroke-width="0.3" transform="translate(347.6,0) scale(0.87,1) translate(-347.6,0)">V</text>
<rect x="248" y="377" width="200" height="1" fill="#000" />
<rect x="249" y="378" width="198" height="14" fill="#808080" />
<rect x="488" y="231" width="100" height="70" fill="#000" />
<rect x="489" y="232" width="98" height="68" fill="#fff" />
<clipPath id="c488_231"><rect x="489" y="232" width="98" height="56"/></clipPath>
<g clip-path="url(#c488_231)">
<line x1="506.89" y1="274.29" x2="500.52" y2="267.92" stroke="#000" stroke-width="1.0" />
<line x1="516.00" y1="267.29" x2="511.50" y2="259.50" stroke="#000" stroke-width="1.0" />
<line x1="526.61" y1="262.90" x2="524.28" y2="254.21" stroke="#000" stroke-width="1.0" />
<line x1="538.00" y1="261.40" x2="538.00" y2="252.40" stroke="#000" stroke-width="1.0" />
<line x1="549.39" y1="262.90" x2="551.72" y2="254.21" stroke="#000" stroke-width="1.0" />
<line x1="560.00" y1="267.29" x2="564.50" y2="259.50" stroke="#000" stroke-width="1.0" />
<line x1="569.11" y1="274.29" x2="575.48" y2="267.92" stroke="#000" stroke-width="1.0" />
<line x1="538.00" y1="305.40" x2="576.89" y2="266.51" stroke="#000" stroke-width="1.05" />
</g>
<text x="500.3" y="264.0" font-size="12.5" fill="#000" text-anchor="middle" stroke="#000" stroke-width="0.3" transform="translate(500.3,0) scale(0.9,1) translate(-500.3,0)">0</text>
<text x="512.5" y="255.6" font-size="12.5" fill="#000" text-anchor="middle" stroke="#000" stroke-width="0.3" transform="translate(512.5,0) scale(0.9,1) translate(-512.5,0)">1</text>
<text x="525.7" y="249.29999999999998" font-size="12.5" fill="#000" text-anchor="middle" stroke="#000" stroke-width="0.3" transform="translate(525.7,0) scale(0.9,1) translate(-525.7,0)">2</text>
<text x="538.4" y="249.1" font-size="12.5" fill="#000" text-anchor="middle" stroke="#000" stroke-width="0.3" transform="translate(538.4,0) scale(0.9,1) translate(-538.4,0)">3</text>
<text x="551.2" y="249.29999999999998" font-size="12.5" fill="#000" text-anchor="middle" stroke="#000" stroke-width="0.3" transform="translate(551.2,0) scale(0.9,1) translate(-551.2,0)">4</text>
<text x="564" y="255.6" font-size="12.5" fill="#000" text-anchor="middle" stroke="#000" stroke-width="0.3" transform="translate(564.0,0) scale(0.9,1) translate(-564.0,0)">5</text>
<text x="576.5" y="264.0" font-size="12.5" fill="#000" text-anchor="middle" stroke="#000" stroke-width="0.3" transform="translate(576.5,0) scale(0.9,1) translate(-576.5,0)">6</text>
<text x="538.3" y="283.2" font-size="11.8" fill="#000" text-anchor="middle" stroke="#000" stroke-width="0.3" transform="translate(538.3,0) scale(0.87,1) translate(-538.3,0)">Volt</text>
<rect x="488" y="288" width="100" height="1" fill="#000" />
<rect x="489" y="289" width="98" height="11" fill="#808080" />
<circle cx="476.4" cy="128.4" r="4.7" fill="#ECE9D8" stroke="#8a8a86" stroke-width="1"/>
<path d="M472.86 131.94 A5.0 5.0 0 0 0 479.94 124.86" fill="none" stroke="#fff" stroke-width="1.3" transform="translate(0.5,0.5)"/>
<path d="M472.86 131.94 A5.0 5.0 0 0 1 479.94 124.86" fill="none" stroke="#383838" stroke-width="1.8"/>
<text x="489.4" y="133.3" font-size="12" fill="#fff" textLength="5.8" lengthAdjust="spacingAndGlyphs" >3</text>
<text x="488.59999999999997" y="132.5" font-size="12" fill="#A5A292" textLength="5.8" lengthAdjust="spacingAndGlyphs" >3</text>
<circle cx="513.2" cy="128.4" r="4.7" fill="#ECE9D8" stroke="#8a8a86" stroke-width="1"/>
<path d="M509.66 131.94 A5.0 5.0 0 0 0 516.74 124.86" fill="none" stroke="#fff" stroke-width="1.3" transform="translate(0.5,0.5)"/>
<path d="M509.66 131.94 A5.0 5.0 0 0 1 516.74 124.86" fill="none" stroke="#383838" stroke-width="1.8"/>
<text x="526.2" y="133.3" font-size="12" fill="#fff" textLength="5.8" lengthAdjust="spacingAndGlyphs" >2</text>
<text x="525.4000000000001" y="132.5" font-size="12" fill="#A5A292" textLength="5.8" lengthAdjust="spacingAndGlyphs" >2</text>
<circle cx="548.2" cy="128.4" r="4.7" fill="#ECE9D8" stroke="#8a8a86" stroke-width="1"/>
<path d="M544.66 131.94 A5.0 5.0 0 0 0 551.74 124.86" fill="none" stroke="#fff" stroke-width="1.3" transform="translate(0.5,0.5)"/>
<path d="M544.66 131.94 A5.0 5.0 0 0 1 551.74 124.86" fill="none" stroke="#383838" stroke-width="1.8"/>
<text x="561.2" y="133.3" font-size="12" fill="#fff" textLength="5.8" lengthAdjust="spacingAndGlyphs" >1</text>
<text x="560.4000000000001" y="132.5" font-size="12" fill="#A5A292" textLength="5.8" lengthAdjust="spacingAndGlyphs" >1</text>
<circle cx="583.2" cy="128.4" r="4.7" fill="#ECE9D8" stroke="#8a8a86" stroke-width="1"/>
<path d="M579.66 131.94 A5.0 5.0 0 0 0 586.74 124.86" fill="none" stroke="#fff" stroke-width="1.3" transform="translate(0.5,0.5)"/>
<path d="M579.66 131.94 A5.0 5.0 0 0 1 586.74 124.86" fill="none" stroke="#383838" stroke-width="1.8"/>
<text x="596.2" y="133.3" font-size="12" fill="#fff" textLength="5.8" lengthAdjust="spacingAndGlyphs" >0</text>
<text x="595.4000000000001" y="132.5" font-size="12" fill="#A5A292" textLength="5.8" lengthAdjust="spacingAndGlyphs" >0</text>
<rect x="472" y="176" width="32" height="16" fill="#C0C0C0" />
<rect x="472" y="177" width="13" height="13" fill="#808080" />
<rect x="472" y="177" width="12" height="12" fill="#fff" />
<rect x="473" y="178" width="11" height="11" fill="#C0C0C0" />
<text x="491.3" y="187.5" font-size="12" fill="#000" textLength="6" lengthAdjust="spacingAndGlyphs" stroke="#000" stroke-width="0.3" text-decoration="underline">3</text>
<rect x="508" y="176" width="32" height="16" fill="#C0C0C0" />
<rect x="508" y="177" width="13" height="13" fill="#808080" />
<rect x="508" y="177" width="12" height="12" fill="#fff" />
<rect x="509" y="178" width="11" height="11" fill="#C0C0C0" />
<text x="527.3" y="187.5" font-size="12" fill="#000" textLength="6" lengthAdjust="spacingAndGlyphs" stroke="#000" stroke-width="0.3" text-decoration="underline">2</text>
<rect x="544" y="176" width="32" height="16" fill="#C0C0C0" />
<rect x="544" y="177" width="13" height="13" fill="#808080" />
<rect x="544" y="177" width="12" height="12" fill="#fff" />
<rect x="545" y="178" width="11" height="11" fill="#C0C0C0" />
<text x="563.3" y="187.5" font-size="12" fill="#000" textLength="6" lengthAdjust="spacingAndGlyphs" stroke="#000" stroke-width="0.3" text-decoration="underline">1</text>
<rect x="580" y="176" width="32" height="16" fill="#C0C0C0" />
<rect x="580" y="177" width="13" height="13" fill="#808080" />
<rect x="580" y="177" width="12" height="12" fill="#fff" />
<rect x="581" y="178" width="11" height="11" fill="#C0C0C0" />
<text x="599.3" y="187.5" font-size="12" fill="#000" textLength="6" lengthAdjust="spacingAndGlyphs" stroke="#000" stroke-width="0.3" text-decoration="underline">0</text>
<rect x="562.5" y="176.5" width="9" height="15" fill="none" stroke="#000" stroke-width="1" stroke-dasharray="1 1"/>
<rect x="463" y="359" width="63" height="39" fill="#000" />
<rect x="464" y="360" width="61" height="37" fill="#808080" />
<rect x="464" y="360" width="59" height="35" fill="#fff" />
<rect x="466" y="362" width="57" height="33" fill="#C0C0C0" />
<path d="M523 360 h2 v2 z" fill="#808080"/><path d="M523 360 v2 h2 z" fill="#808080" opacity="0.5"/>
<path d="M464 395 v2 h2 z" fill="#808080"/>
<rect x="554" y="359" width="63" height="39" fill="#000" />
<rect x="555" y="360" width="61" height="37" fill="#808080" />
<rect x="555" y="360" width="59" height="35" fill="#fff" />
<rect x="557" y="362" width="57" height="33" fill="#C0C0C0" />
<path d="M614 360 h2 v2 z" fill="#808080"/><path d="M614 360 v2 h2 z" fill="#808080" opacity="0.5"/>
<path d="M555 395 v2 h2 z" fill="#808080"/>
<text x="475.6" y="390.6" fill="#6474A4" stroke="#6474A4" stroke-width="1.8" font-size="33" font-weight="bold" textLength="12" lengthAdjust="spacingAndGlyphs" stroke-linejoin="round">?</text>
<text x="474.3" y="389.4" fill="#007C8C" stroke="#007C8C" stroke-width="1.8" font-size="33" font-weight="bold" textLength="12" lengthAdjust="spacingAndGlyphs" stroke-linejoin="round">?</text>
<text x="473.6" y="388.7" fill="#28D4E4" stroke="#28D4E4" stroke-width="1.4" font-size="33" font-weight="bold" textLength="12" lengthAdjust="spacingAndGlyphs" stroke-linejoin="round">?</text>
<text x="495.6" y="382.6" font-size="12" fill="#000" textLength="18.6" lengthAdjust="spacingAndGlyphs" stroke="#000" stroke-width="0.3" >Hilfe</text>
<g stroke-linecap="round" fill="none">
<path d="M563.6 370.8 L577.4 385.6 M579 369.4 L562.6 388.4" stroke="#707070" stroke-width="5"/>
<path d="M561.8 369 L575.2 383.4" stroke="#A80010" stroke-width="5.2"/>
<path d="M576.8 367.8 L560.8 386.2" stroke="#B00414" stroke-width="5.2"/>
<path d="M561.4 368.4 L574 382" stroke="#D83848" stroke-width="1.4"/>
<path d="M576.2 367.4 L560.4 385.4" stroke="#DC4050" stroke-width="1.4"/>
</g>
<text x="578.9" y="382.6" font-size="12" fill="#000" textLength="33" lengthAdjust="spacingAndGlyphs" stroke="#000" stroke-width="0.3" >Abbruch</text>
</svg>
</body></html>
